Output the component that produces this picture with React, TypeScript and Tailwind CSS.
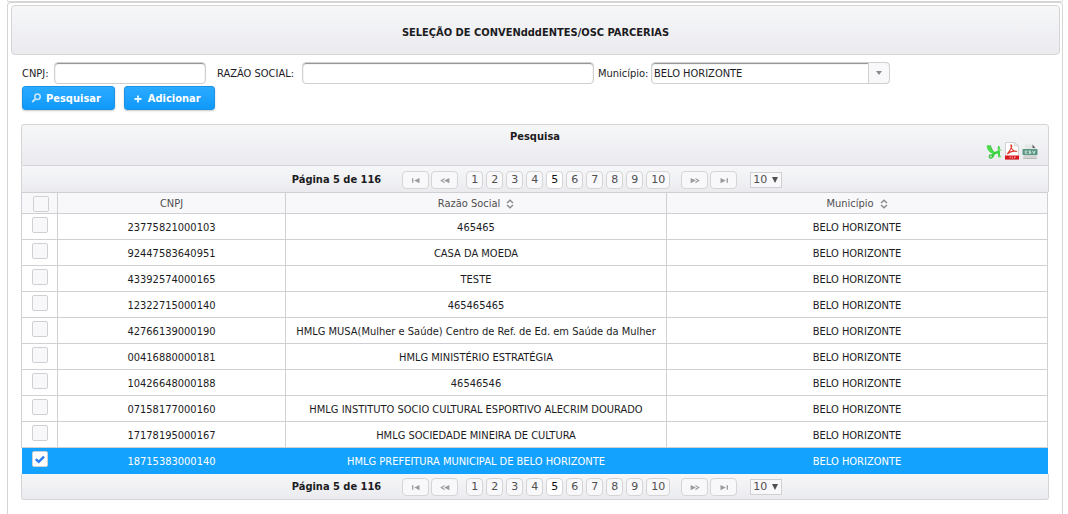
import { useState } from "react";

const rows = [
  { cnpj: "23775821000103", name: "465465" },
  { cnpj: "92447583640951", name: "CASA DA MOEDA" },
  { cnpj: "43392574000165", name: "TESTE" },
  { cnpj: "12322715000140", name: "465465465" },
  { cnpj: "42766139000190", name: "HMLG MUSA(Mulher e Saúde) Centro de Ref. de Ed. em Saúde da Mulher" },
  { cnpj: "00416880000181", name: "HMLG MINISTÉRIO ESTRATÉGIA" },
  { cnpj: "10426648000188", name: "46546546" },
  { cnpj: "07158177000160", name: "HMLG INSTITUTO SOCIO CULTURAL ESPORTIVO ALECRIM DOURADO" },
  { cnpj: "17178195000167", name: "HMLG SOCIEDADE MINEIRA DE CULTURA" },
  { cnpj: "18715383000140", name: "HMLG PREFEITURA MUNICIPAL DE BELO HORIZONTE" },
];

const city = "BELO HORIZONTE";

function Checkbox({ label, checked, onChange }: { label: string; checked: boolean; onChange: () => void }) {
  return (
    <span className="relative inline-block size-4 align-top">
      <input
        type="checkbox"
        aria-label={label}
        checked={checked}
        onChange={onChange}
        className="block size-4 appearance-none rounded-[2px] border border-[#d0d0d4] bg-[#f8f8fb] checked:bg-white"
      />
      {checked && (
        <svg viewBox="0 0 16 16" className="pointer-events-none absolute inset-0 size-4" fill="none" stroke="#2b7df0" strokeWidth="2.4">
          <path d="M3.800 8.200 6.700 10.800 12 5.600" />
        </svg>
      )}
    </span>
  );
}

function SortIcon() {
  return (
    <svg viewBox="0 0 8 10" className="h-[10px] w-2" fill="none" stroke="#8c8c8c" strokeWidth="1.5">
      <path d="M1 4 4 1.200 7 4M1 6 4 8.800 7 6" />
    </svg>
  );
}

const arrows: Record<string, string> = {
  first: "M1 1.500h1.500v5H1zM9.500 1v6L3.500 4z",
  prev: "M5 1v1.600L2.400 4 5 5.400V7L0 4zM10.500 1v6L4.500 4z",
  next: "M.500 1v6l6-3zM6 1v1.600L8.600 4 6 5.400V7l5-3z",
  last: "M1.500 1v6l6-3zM8.500 1.500H10v5H8.500z",
};

function NavButton({ kind, label }: { kind: string; label: string }) {
  return (
    <button aria-label={label} className="flex h-[18px] w-[27px] items-center justify-center rounded-[4px] border border-[#d5d5d5] bg-[#f8f8fb] pt-px">
      <svg viewBox="0 0 11 8" className="h-[7px] w-[10px]" fill="#9b9b9d">
        <path d={arrows[kind]} />
      </svg>
    </button>
  );
}

function Paginator({ bottom }: { bottom?: boolean }) {
  return (
    <div
      className={
        "flex h-[26px] items-center justify-center border-x border-[#d5d5d5] bg-linear-to-b from-[#f6f7f9] to-[#ebebef] pl-1 font-['DejaVu_Sans_Condensed','DejaVu_Sans',sans-serif] " +
        (bottom ? "rounded-b-[3px] border-b pt-px" : "pt-px")
      }
    >
      <span className="mr-[21px] text-[11px] font-bold text-[#1c1c1e]">Página 5 de 116</span>
      <span className="flex gap-0.5">
        <NavButton kind="first" label="Primeira página" />
        <NavButton kind="prev" label="Página anterior" />
      </span>
      <span className="mr-[11px] ml-2 flex gap-[3px]">
        {[1, 2, 3, 4, 5, 6, 7, 8, 9, 10].map((n) => (
          <button
            key={n}
            className={
              "h-[18px] rounded-[4px] border border-[#d5d5d5] px-1 font-['DejaVu_Sans',sans-serif] text-[11px] leading-4 " +
              (n === 5 ? "bg-white text-[#111]" : "bg-[#f8f8fb] text-[#4f4f4f]")
            }
          >
            {n}
          </button>
        ))}
      </span>
      <span className="flex gap-0.5">
        <NavButton kind="next" label="Próxima página" />
        <NavButton kind="last" label="Última página" />
      </span>
      <span className="relative ml-[13px] flex">
        <select aria-label="Linhas por página" className="h-4 w-8 appearance-none border border-[#d0d0d4] bg-[#f8f8fb] pl-[2px] font-['DejaVu_Sans',sans-serif] text-[11px] leading-[14px] text-[#4f4f4f]">
          <option>10</option>
          <option>20</option>
        </select>
        <svg viewBox="0 0 6 6" className="pointer-events-none absolute top-[5px] right-1 size-[6px]" fill="#4f4f4f">
          <path d="M0 0h6L3 6z" />
        </svg>
      </span>
    </div>
  );
}

function ExcelIcon() {
  return (
    <svg viewBox="0 0 16 16" className="size-4" fill="none" strokeLinecap="round">
      <path d="M.800 1.500C2 .300 4.500 1 5 3.500L7.500 7.500 8 10C4 9.500.8 6 .800 1.500z" fill="#48dd48" />
      <path d="M4.500 1.500C5 4 6.200 6 7.800 7.800" stroke="#2fb63a" strokeWidth=".8" />
      <path d="M6.500 12.300 8.200 9.200 12.500 8" stroke="#35cf3b" strokeWidth="2.400" />
      <path d="M12.800 8V3M13 9v3.500" stroke="#3fd543" strokeWidth="2" />
      <path d="M13 6h1.800M13.200 12.500h1.600" stroke="#7be27b" strokeWidth="1.400" />
      <circle cx="4.800" cy="12.500" r="1.600" fill="#c4f3c4" stroke="#35bd3c" strokeWidth="1.200" />
    </svg>
  );
}

function PdfIcon() {
  return (
    <svg viewBox="0 0 16 18" className="h-[18px] w-4">
      <path d="M1.500.5h9L14.500 4v13.500h-13z" fill="#fff" stroke="#d2d2d2" />
      <path d="M10.500.5V4h4z" fill="#ececec" stroke="#cfcfcf" strokeWidth=".7" />
      <path d="M7 3c1.500 0 .7 3.500-3.700 9C6 9.500 9 8.500 13 9.500 9.500 9.500 7 7 6.800 3z" fill="none" stroke="#df3b30" strokeWidth="1.100" />
      <path d="M1 13.500h14V17.500H1z" fill="#d8151b" />
      <path d="M6 14.500v2M6 15h1.200M8.300 14.500v2M8.300 16h1M10.500 14.500v2M10.500 15h1.500" stroke="#f4a5a6" strokeWidth=".8" />
    </svg>
  );
}

function CsvIcon() {
  return (
    <svg viewBox="0 0 16 16" className="size-4">
      <path d="M3 .5h8l3 3.500V14H3z" fill="#e6e7e7" />
      <path d="M10.500.5 13.500 4h-3z" fill="#5d6462" />
      <path d="M2 11h12.500l1 3.500h-15z" fill="#d2d5d4" />
      <path d="M1.500 14.500h13" stroke="#b7bab9" />
      <rect x=".5" y="5" width="15" height="6" rx=".8" fill="#5a9583" />
      <path d="M5.500 7H3.300v2.300h2.200M9 7H7v1.200h1.800v1.100H6.700M10.500 6.700l1.300 3 1.300-3" fill="none" stroke="#dcefe8" strokeWidth=".9" />
    </svg>
  );
}

const inputStyle =
  "h-[22px] rounded-[4px] border border-[#d0d0d0] bg-white px-[2px] text-[11px] shadow-[inset_0_1px_1px_#8c8c8c] outline-none";
const buttonStyle =
  "flex h-6 items-center gap-[3px] rounded-[3px] border border-[#1b92e6] bg-linear-to-b from-[#2aabff] to-[#0d99fb] pt-0.5 pr-[13px] pl-2 text-[11px] font-bold text-white shadow-[0_1px_2px_#c8c8c8]";
const cellBase = "p-0 text-center ";
const cellLines = "border border-[#d0d0d4] ";
const selectedLines = "border-y border-[#14a2ff] ";

export default function App() {
  const [selected, setSelected] = useState<string[]>(["18715383000140"]);
  const toggle = (id: string) =>
    setSelected((s) => (s.includes(id) ? s.filter((x) => x !== id) : [...s, id]));

  return (
    <div className="flex min-h-screen flex-col bg-white pr-[5px] pl-[7px] font-['DejaVu_Sans_Condensed','DejaVu_Sans',sans-serif] text-[11px] leading-[14px] text-[#1c1c1e]">
      <div className="h-0.5 rounded-b-[4px] border border-t-0 border-[#d5d5d5]" />
      <main className="flex-1 rounded-t-[4px] border border-b-0 border-[#d5d5d5] pt-0.5 pr-0.5 pl-[3px]">
        <h1 className="flex h-[50px] items-center justify-center rounded-[4px] border border-[#d5d5d5] bg-linear-to-b from-[#f6f7f9] to-[#ebebef] pt-1.5 text-[11px] font-bold">
          SELEÇÃO DE CONVENdddENTES/OSC PARCERIAS
        </h1>
        <div className="pr-[11px] pl-[10px]">
          <form onSubmit={(e) => e.preventDefault()} className="pl-px">
            <div className="mt-[7px] flex items-center">
              <label htmlFor="cnpj" className="w-8 pt-0.5 whitespace-nowrap">CNPJ:</label>
              <input id="cnpj" className={inputStyle + " w-[152px]"} />
              <label htmlFor="razao" className="ml-[11px] w-[85px] pt-0.5 whitespace-nowrap">RAZÃO SOCIAL:</label>
              <input id="razao" className={inputStyle + " w-[292px]"} />
              <label htmlFor="municipio" className="ml-1 w-[53px] pt-0.5 whitespace-nowrap">Município:</label>
              <span className="relative flex">
                <select id="municipio" className={inputStyle + " w-[239px] appearance-none pt-0.5"}>
                  <option>BELO HORIZONTE</option>
                </select>
                <span className="pointer-events-none absolute inset-y-0 right-0 flex w-[22px] items-center justify-center rounded-r-[4px] border border-[#d0d0d0] bg-[#f8f8fb]">
                  <svg viewBox="0 0 6 4" className="h-1 w-[6px]" fill="#8a8a8a">
                    <path d="M0 0h6L3 4z" />
                  </svg>
                </span>
              </span>
            </div>
            <div className="mt-0.5 flex gap-[9px]">
              <button className={buttonStyle}>
                <svg viewBox="0 0 12 12" className="size-3" fill="none" stroke="#c8e9ff" strokeWidth="1.500">
                  <circle cx="6.500" cy="3.800" r="2.700" />
                  <path d="M4.300 6 1.200 9" strokeWidth="1.800" />
                </svg>
                Pesquisar
              </button>
              <button className={buttonStyle}>
                <svg viewBox="0 0 12 12" className="size-3" stroke="#e6f5ff" strokeWidth="1.800">
                  <path d="M5 2.500v7M1.500 6h7" />
                </svg>
                Adicionar
              </button>
            </div>
          </form>

          <section className="mt-[14px]">
            <header className="grid h-[42px] grid-cols-[1fr_auto_1fr] rounded-t-[3px] border border-[#d5d5d5] bg-linear-to-b from-[#f6f7f9] to-[#ebebef]">
              <h2 className="col-start-2 pt-[5px] text-[11px] font-bold">Pesquisa</h2>
              <div className="flex items-end justify-end gap-0.5 pr-[10px] pb-[5px]">
                <button aria-label="Exportar Excel"><ExcelIcon /></button>
                <button aria-label="Exportar PDF"><PdfIcon /></button>
                <button aria-label="Exportar CSV"><CsvIcon /></button>
              </div>
            </header>
            <Paginator />
            <div className="pr-px">
              <table className="w-full table-fixed border-collapse">
                <colgroup>
                  <col className="w-9" />
                  <col className="w-[228px]" />
                  <col />
                  <col />
                </colgroup>
                <thead>
                  <tr className="h-[21px] bg-[#f8f8fb] text-[#4f4f4f]">
                    <th className={cellBase + cellLines + "pt-0.5 pl-0.5"}>
                      <Checkbox
                        label="Selecionar todos"
                        checked={selected.length === rows.length}
                        onChange={() => setSelected(selected.length === rows.length ? [] : rows.map((r) => r.cnpj))}
                      />
                    </th>
                    <th className={cellBase + cellLines + "pt-px font-normal"}>CNPJ</th>
                    <th className={cellBase + cellLines + "pt-px font-normal"}>
                      <span className="inline-flex items-center gap-[6px] align-top">Razão Social <SortIcon /></span>
                    </th>
                    <th className={cellBase + cellLines + "pt-px font-normal"}>
                      <span className="inline-flex items-center gap-[6px] align-top">Município <SortIcon /></span>
                    </th>
                  </tr>
                </thead>
                <tbody>
                  {rows.map((r) => {
                    const on = selected.includes(r.cnpj);
                    const cell = cellBase + (on ? selectedLines : cellLines);
                    return (
                      <tr key={r.cnpj} className={"h-[26px] " + (on ? "bg-[#14a2ff] text-white" : "bg-white")}>
                        <td className={cell + "pb-[3px]"}>
                          <Checkbox label={"Selecionar " + r.cnpj} checked={on} onChange={() => toggle(r.cnpj)} />
                        </td>
                        <td className={cell + "pt-0.5"}>{r.cnpj}</td>
                        <td className={cell + "pt-0.5"}>{r.name}</td>
                        <td className={cell + "pt-0.5"}>{city}</td>
                      </tr>
                    );
                  })}
                </tbody>
              </table>
            </div>
            <Paginator bottom />
          </section>
        </div>
      </main>
    </div>
  );
}
